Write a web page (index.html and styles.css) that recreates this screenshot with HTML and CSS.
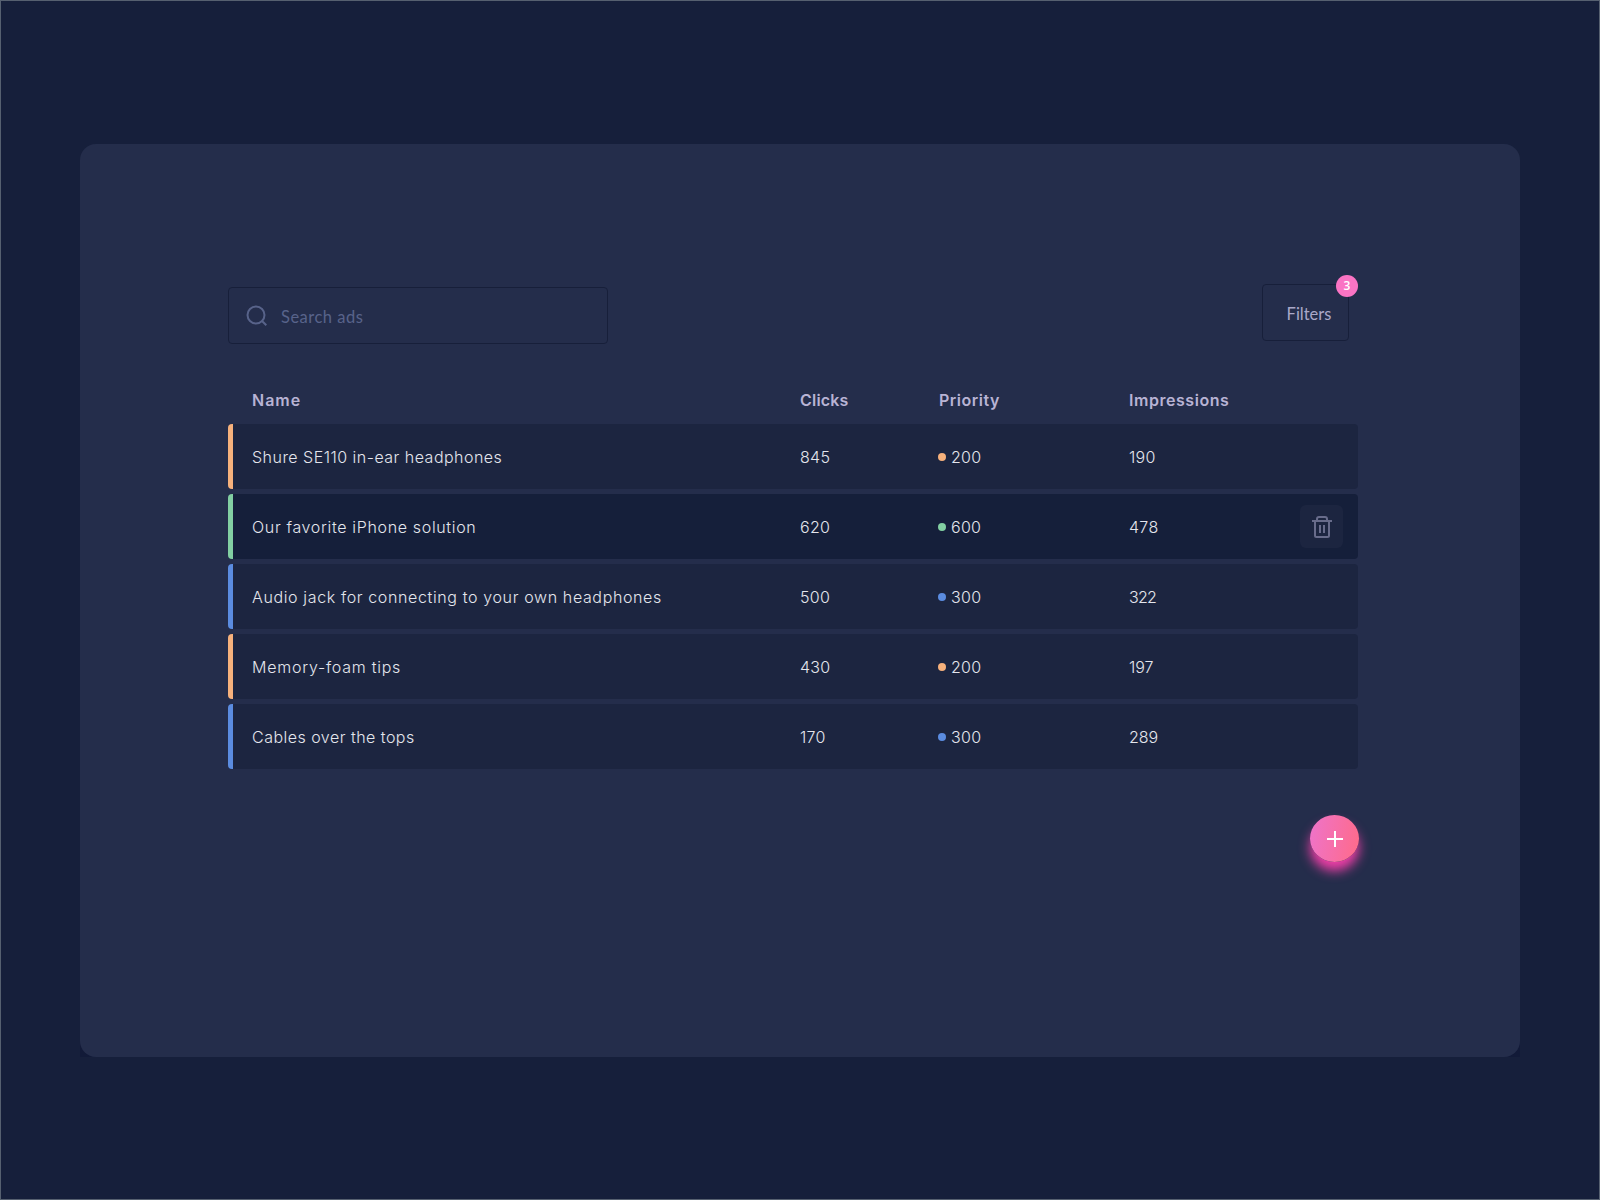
FILE: index.html
```html
<!DOCTYPE html>
<html lang="en">
<head>
<meta charset="utf-8">
<title>Ads</title>
<link rel="stylesheet" href="styles.css">
</head>
<body>
<div class="backdrop">
<main class="panel">
  <div class="toolbar">
    <label class="search">
      <svg class="search-icon" width="22" height="22" viewBox="0 0 22 22" fill="none" stroke="currentColor" stroke-width="2"><circle cx="10" cy="10" r="8.5"/><path d="M16 16l4.3 4.3"/></svg>
      <span class="search-text">Search ads</span>
    </label>
    <button class="filters"><span class="filters-text">Filters</span><span class="badge">3</span></button>
  </div>
  <div class="head">
    <span class="h-name">Name</span><span class="h-clicks">Clicks</span><span class="h-priority">Priority</span><span class="h-impressions">Impressions</span>
  </div>
  <div class="rows">
    <div class="row orange"><span class="name n1">Shure SE110 in-ear headphones</span><span class="num">845</span><span class="priority"><i class="dot"></i><span class="num">200</span></span><span class="num">190</span></div>
    <div class="row green active"><span class="name n2">Our favorite iPhone solution</span><span class="num">620</span><span class="priority"><i class="dot"></i><span class="num">600</span></span><span class="num">478</span>
      <button class="delete" aria-label="Delete"><svg width="22" height="24" viewBox="0 0 22 24" fill="none" stroke="currentColor" stroke-width="2"><path d="M1 6h20M6 6V4a2 2 0 0 1 2-2h6a2 2 0 0 1 2 2v2M4 6v14.500a1.500 1.500 0 0 0 1.500 1.500h11a1.500 1.500 0 0 0 1.500-1.500V6M9 10v8M13 10v8"/></svg></button></div>
    <div class="row blue"><span class="name n3">Audio jack for connecting to your own headphones</span><span class="num">500</span><span class="priority"><i class="dot"></i><span class="num">300</span></span><span class="num narrow">322</span></div>
    <div class="row orange"><span class="name n4">Memory-foam tips</span><span class="num">430</span><span class="priority"><i class="dot"></i><span class="num">200</span></span><span class="num plain">197</span></div>
    <div class="row blue"><span class="name n5">Cables over the tops</span><span class="num">170</span><span class="priority"><i class="dot"></i><span class="num">300</span></span><span class="num plain">289</span></div>
  </div>
  <button class="add" aria-label="Add"><svg width="16" height="16" viewBox="0 0 16 16" stroke="#fff" stroke-width="2"><path d="M8 0v16M0 8h16"/></svg></button>
</main>
</div>
</body>
</html>
```
FILE: styles.css
```css
* { box-sizing: border-box; }
body {
  margin: 0;
  height: 1200px;
  padding: 143px 79px;
  border: 1px solid #566070;
  background: #161f3b;
  font: 400 16px/20px Inter, "Liberation Sans", sans-serif;
  color: #e4e6ed;
}
button { font: inherit; padding: 0; border: 0; }
svg { display: block; }
.backdrop { background: linear-gradient(#161f3b 50%, #121a38 50%); }
.panel {
  display: flex;
  flex-direction: column;
  height: 913px;
  padding: 140px 162px 0 148px;
  border-radius: 16px;
  background: #242d4b;
}
.toolbar {
  display: flex;
  justify-content: space-between;
  align-items: flex-start;
  height: 60px;
  padding-right: 9px;
}
.search {
  display: flex;
  align-items: center;
  gap: 13px;
  width: 380px;
  height: 57px;
  margin-top: 3px;
  padding-left: 17px;
  border: 1px solid #171f3a;
  border-radius: 4px;
  color: #58638a;
}
.search-text { font-family: Lato, sans-serif; font-size: 16.5px; letter-spacing: .5px; padding-top: 2px; }
.filters {
  position: relative;
  width: 87px;
  height: 57px;
  padding: 2px 0 0 7px;
  border: 1px solid #171f3a;
  border-radius: 4px;
  background: transparent;
  color: #aaa8c8;
}
.filters-text { font-family: Lato, sans-serif; font-size: 16.5px; }
.badge {
  position: absolute;
  top: -10px;
  right: -10px;
  width: 22px;
  height: 22px;
  border-radius: 50%;
  background: #fa74c4;
  color: #fff;
  font: 600 12px/22px "Open Sans", sans-serif;
}
.head, .row {
  display: grid;
  grid-template-columns: 548px 139px 190px 1fr auto;
  align-items: center;
}
.head {
  height: 34px;
  margin: 39px 0 7px;
  padding-left: 24px;
  color: #b8b3d4;
  font-weight: 600;
}
.h-name { letter-spacing: 1px; }
.h-clicks { letter-spacing: .2px; }
.h-priority { letter-spacing: .5px; }
.h-impressions { letter-spacing: .55px; }
.rows { display: flex; flex-direction: column; gap: 5px; }
.row {
  height: 65px;
  padding-left: 19px;
  border-left: 5px solid var(--mark);
  border-radius: 4px;
  background: #1c2540;
  font-weight: 300;
}
.active { background: #151f3a; }
.orange { --mark: #f6b17c; }
.green { --mark: #82cfa2; }
.blue { --mark: #5b8ce0; }
.n1 { letter-spacing: .48px; }
.n2 { letter-spacing: .66px; }
.n3 { letter-spacing: .63px; }
.n4 { letter-spacing: .75px; }
.n5 { letter-spacing: .48px; }
.num { letter-spacing: .3px; }
.plain { letter-spacing: 0; }
.narrow { letter-spacing: -.7px; }
.priority { display: flex; align-items: center; gap: 5px; margin-left: -1px; }
.dot { width: 8px; height: 8px; border-radius: 50%; background: var(--mark); }
.delete {
  display: grid;
  place-items: center;
  width: 43px;
  height: 43px;
  margin-right: 15px;
  border-radius: 6px;
  background: #1c2540;
  color: #686c8b;
}
.add {
  display: grid;
  place-items: center;
  align-self: flex-end;
  width: 49px;
  height: 47px;
  margin: 46px -1px 0 0;
  border-radius: 50%;
  background: linear-gradient(100deg, #ee74cb, #ff6a88);
  box-shadow: 0 9px 12px #f03fa8;
}
```
